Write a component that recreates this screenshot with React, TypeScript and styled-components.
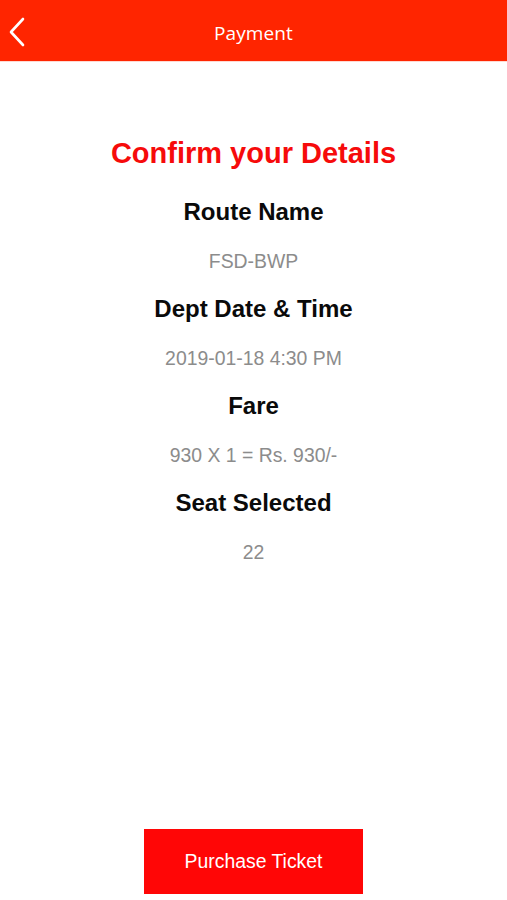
import React from 'react';
import styled, { createGlobalStyle } from 'styled-components';

const GlobalStyle = createGlobalStyle`
  html, body {
    margin: 0;
    padding: 0;
    background: #ffffff;
  }
  * { box-sizing: border-box; }
`;

interface Detail {
  label: string
  value: string
}

const details: Detail[] = [
  { label: 'Route Name', value: 'FSD-BWP' },
  { label: 'Dept Date & Time', value: '2019-01-18 4:30 PM' },
  { label: 'Fare', value: '930 X 1 = Rs. 930/-' },
  { label: 'Seat Selected', value: '22' },
];

const App: React.FC = () => {
  return (
    <>
      <GlobalStyle />
      <Screen>
        <Header>
          <BackButton aria-label="Back">
            <svg width="18" height="30" viewBox="0 0 18 30" fill="none">
              <polyline points="15,2 3,15 15,28" stroke="#ffffff" strokeWidth="2.6" strokeLinecap="round" strokeLinejoin="round" />
            </svg>
          </BackButton>
          <HeaderTitle>Payment</HeaderTitle>
        </Header>
        <Content>
          <Title>Confirm your Details</Title>
          <DetailList>
            {details.map((d) => (
              <React.Fragment key={d.label}>
                <Label>{d.label}</Label>
                <Value>{d.value}</Value>
              </React.Fragment>
            ))}
          </DetailList>
        </Content>
        <Footer>
          <PurchaseButton>Purchase Ticket</PurchaseButton>
        </Footer>
      </Screen>
    </>
  );
}

const Screen = styled.div`
  width: 507px;
  height: 900px;
  display: flex;
  flex-direction: column;
  background: #ffffff;
  overflow: hidden;
`;

const Header = styled.header`
  position: relative;
  height: 62px;
  flex-shrink: 0;
  background: #ff2500;
  display: flex;
  align-items: center;
  justify-content: center;
  border-bottom: 1px solid #ffd9d2;
`;

const BackButton = styled.button`
  position: absolute;
  left: 8px;
  top: 17px;
  border: none;
  background: transparent;
  padding: 0;
  display: flex;
  cursor: pointer;
`;

const HeaderTitle = styled.h1`
  margin: 0;
  font-family: "Open Sans", "Noto Sans", sans-serif;
  font-size: 19px;
  font-weight: 400;
  color: #ffffff;
  line-height: 1;
  padding-top: 5px;
  letter-spacing: 0.1px;
`;

const Content = styled.main`
  flex: 1;
  display: flex;
  flex-direction: column;
  align-items: center;
  padding-top: 73px;
`;

const Title = styled.h2`
  margin: 0;
  font-family: "Liberation Sans", Arial, sans-serif;
  font-size: 29px;
  font-weight: 700;
  color: #f60b0b;
  line-height: 36px;
`;

const DetailList = styled.div`
  margin-top: 17px;
  display: flex;
  flex-direction: column;
  align-items: center;
`;

const Label = styled.div`
  font-family: "Liberation Sans", Arial, sans-serif;
  font-size: 24px;
  font-weight: 700;
  color: #0a0a0a;
  line-height: 48.5px;
`;

const Value = styled.div`
  font-family: "Liberation Sans", Arial, sans-serif;
  font-size: 19.4px;
  color: #8c8c8c;
  line-height: 48.5px;
`;

const Footer = styled.footer`
  display: flex;
  justify-content: center;
  padding-bottom: 6px;
`;

const PurchaseButton = styled.button`
  width: 219px;
  height: 65px;
  border: none;
  background: #ff0606;
  color: #ffffff;
  font-family: "Liberation Sans", Arial, sans-serif;
  font-size: 19.4px;
  cursor: pointer;
`;

export default App;
